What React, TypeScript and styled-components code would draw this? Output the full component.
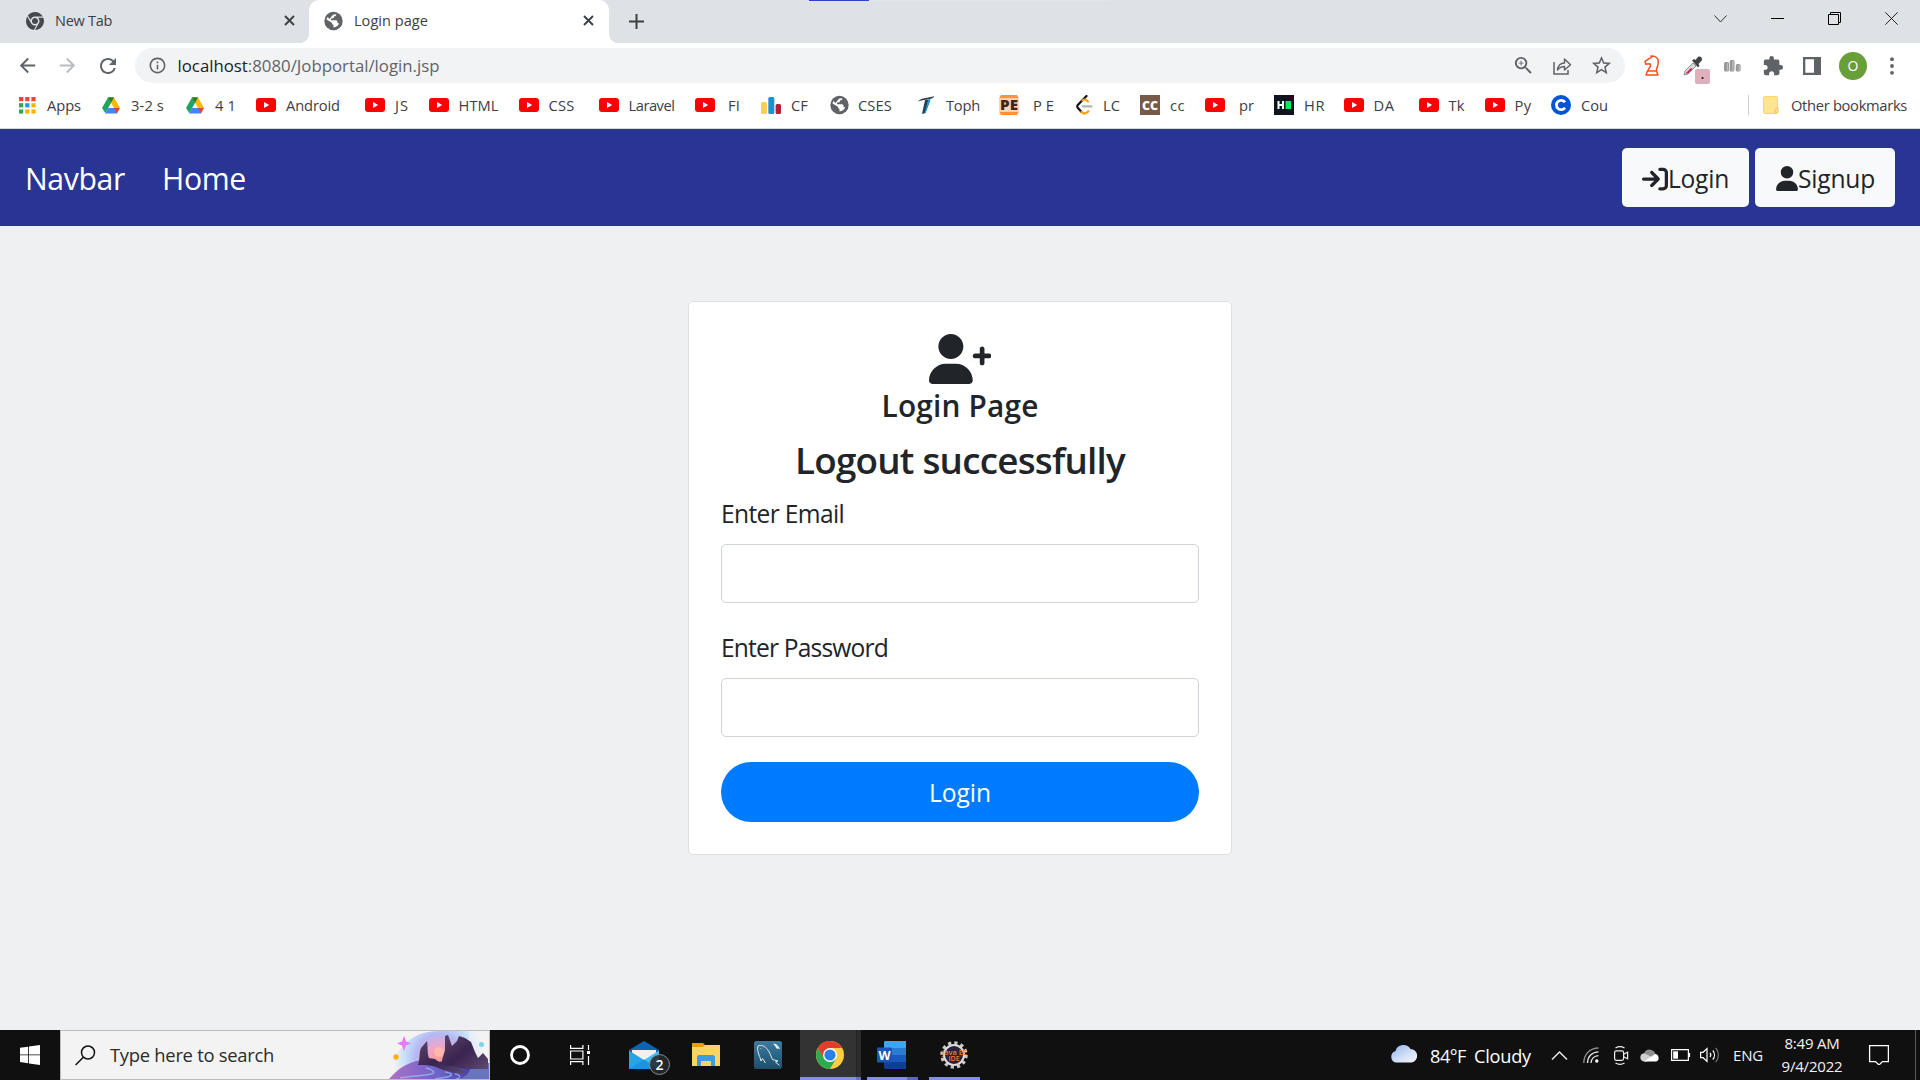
import React, { useLayoutEffect, useRef, useState } from "react";
import styled, { createGlobalStyle, css } from "styled-components";
import { FaArrowRightToBracket, FaChrome, FaUser } from "react-icons/fa6";
import {
  MdArrowBack,
  MdArrowForward,
  MdExtension,
  MdInfoOutline,
  MdRefresh,
  MdStarBorder,
  MdZoomIn,
} from "react-icons/md";

const GlobalStyle = createGlobalStyle`
  * { box-sizing: border-box; }
  body {
    margin: 0;
    overflow: hidden;
    font-family: "Open Sans", "Noto Sans", sans-serif;
  }
  svg { display: block; flex: none; }
`;

/* ---------- text set to a given measure ---------- */

const Measure = styled.span<{ $w: number; $size: number; $color: string; $weight?: number; $ml?: number; $drop?: number }>`
  display: block;
  flex: none;
  width: ${(p) => p.$w}px;
  margin-left: ${(p) => p.$ml ?? 0}px;
  padding-top: ${(p) => p.$drop ?? 0}px;
  font-size: ${(p) => p.$size}px;
  font-weight: ${(p) => p.$weight ?? 400};
  color: ${(p) => p.$color};
  white-space: pre;
  text-align: left;
`;

type LabelProps = {
  w: number;
  size: number;
  color?: string;
  weight?: number;
  ml?: number;
  drop?: number;
  text: string;
  children?: React.ReactNode;
};

function Label({ w, size, color = "#3c4043", weight, ml, drop, text, children }: LabelProps) {
  const ref = useRef<HTMLSpanElement>(null);
  const [spacing, setSpacing] = useState(0);
  useLayoutEffect(() => {
    if (!ref.current) return;
    const natural = ref.current.getBoundingClientRect().width;
    setSpacing((w - natural) / text.length);
  }, [w, text]);
  return (
    <Measure $w={w} $size={size} $color={color} $weight={weight} $ml={ml} $drop={drop}>
      <span ref={ref} style={{ letterSpacing: spacing }}>
        {children ?? text}
      </span>
    </Measure>
  );
}

/* ---------- browser chrome ---------- */

const Screen = styled.div`
  width: 1920px;
  height: 1080px;
  display: flex;
  flex-direction: column;
  background: #eff0f2;
`;

const TabStrip = styled.div`
  position: relative;
  height: 43px;
  flex: none;
  display: flex;
  align-items: stretch;
  background: #dee1e6;
`;

const LoadStripe = styled.div`
  position: absolute;
  top: 0;
  left: 809px;
  width: 301px;
  height: 1px;
  background: linear-gradient(90deg, #2f3fd3 60px, #e4e5e8 60px);
`;

const Tab = styled.div<{ $active?: boolean; $w: number; $pl: number }>`
  position: relative;
  width: ${(p) => p.$w}px;
  padding: 0 12px 2px ${(p) => p.$pl}px;
  display: flex;
  align-items: center;
  ${(p) =>
    p.$active &&
    css`
      background: #fff;
      border-radius: 10px 10px 0 0;
      &::before,
      &::after {
        content: "";
        position: absolute;
        bottom: 0;
        width: 10px;
        height: 10px;
      }
      &::before {
        left: -10px;
        background: radial-gradient(circle at 0 0, #dee1e6 10px, #fff 10.5px);
      }
      &::after {
        right: -10px;
        background: radial-gradient(circle at 100% 0, #dee1e6 10px, #fff 10.5px);
      }
    `}
`;

const PushRight = styled.div<{ $gap?: number; $pr?: number }>`
  margin-left: auto;
  display: flex;
  align-items: center;
  gap: ${(p) => p.$gap ?? 0}px;
  padding-right: ${(p) => p.$pr ?? 0}px;
`;

const NewTab = styled.div`
  display: flex;
  align-items: center;
  margin-left: 20px;
`;

const WindowControls = styled(PushRight)`
  padding-bottom: 6px;
`;

const Toolbar = styled.div`
  height: 40px;
  flex: none;
  display: flex;
  align-items: flex-end;
  padding: 0 13px 0 16px;
  background: #fff;
`;

const NavIcons = styled.div`
  height: 35px;
  width: 119px;
  display: flex;
  align-items: center;
  gap: 17px;
  color: #5f6368;
`;

const Omnibox = styled.div`
  width: 1490px;
  height: 35px;
  border-radius: 18px;
  padding: 0 12px 0 13px;
  display: flex;
  align-items: center;
  background: #f1f3f4;
  color: #5f6368;
`;

const Host = styled.span`
  color: #202124;
`;

const Extensions = styled.div`
  height: 35px;
  margin-left: 18px;
  display: flex;
  align-items: center;
  color: #5f6368;
`;

const ExtIcon = styled.div<{ $ml?: number }>`
  position: relative;
  margin-left: ${(p) => p.$ml ?? 0}px;
`;

const PickerBadge = styled.span`
  position: absolute;
  left: 12px;
  top: 13px;
  width: 15px;
  height: 15px;
  border-radius: 2px;
  background: #e0afbd;
  color: #222;
  font-size: 12px;
  font-weight: 700;
  line-height: 11px;
  text-align: center;
`;

const Avatar = styled.div`
  width: 28px;
  height: 28px;
  margin-left: 18px;
  border-radius: 50%;
  background: #689f38;
  color: #fff;
  display: flex;
  align-items: center;
  justify-content: center;
  font-size: 14px;
`;

const BookmarkBar = styled.div`
  height: 46px;
  flex: none;
  display: flex;
  align-items: center;
  padding: 0 0 1px 19px;
  background: #fff;
  border-bottom: 1px solid #d6d8dc;
`;

const Bookmark = styled.div<{ $w: number }>`
  width: ${(p) => p.$w}px;
  flex: none;
  display: flex;
  align-items: center;
`;

const IconBox = styled.div<{ $w: number }>`
  width: ${(p) => p.$w}px;
  flex: none;
`;

const Divider = styled.div`
  width: 1px;
  height: 20px;
  background: #c9ccd0;
`;

/* ---------- page ---------- */

const Navbar = styled.div`
  height: 97px;
  flex: none;
  display: flex;
  align-items: center;
  padding: 0 25px 0 24px;
  background: #283593;
`;

const NavButton = styled.button<{ $w: number; $pl: number }>`
  width: ${(p) => p.$w}px;
  height: 59px;
  padding: 2px 0 0 ${(p) => p.$pl}px;
  border: 0;
  border-radius: 5px;
  background: #f8f9fa;
  color: #212529;
  font-family: inherit;
  display: flex;
  align-items: center;
`;

const Page = styled.main`
  flex: 1;
  padding-top: 75px;
  display: flex;
  justify-content: center;
  align-items: flex-start;
`;

const Card = styled.section`
  width: 544px;
  height: 554px;
  padding: 32px 32px 0;
  border: 1px solid #dfdfdf;
  border-radius: 5px;
  background: #fff;
`;

const CardHead = styled.header`
  display: flex;
  flex-direction: column;
  align-items: center;
  color: #212529;
`;

const Line = styled.div<{ $h: number; $mt: number }>`
  height: ${(p) => p.$h}px;
  line-height: ${(p) => p.$h}px;
  margin-top: ${(p) => p.$mt}px;
`;

const Input = styled.input`
  display: block;
  width: 478px;
  height: 59px;
  margin-top: 11px;
  border: 1px solid #ced4da;
  border-radius: 5px;
  outline: 0;
  background: #fff;
`;

const Submit = styled.button`
  width: 478px;
  height: 60px;
  margin-top: 25px;
  padding: 0;
  border: 0;
  border-radius: 30px;
  background: #007bff;
  font-family: inherit;
  display: flex;
  align-items: center;
  justify-content: center;
`;

/* ---------- taskbar ---------- */

const Taskbar = styled.footer`
  height: 50px;
  flex: none;
  display: flex;
  background: #101010;
`;

const Start = styled.div`
  width: 60px;
  display: flex;
  align-items: center;
  justify-content: center;
`;

const Search = styled.div`
  width: 430px;
  height: 50px;
  padding-left: 14px;
  display: flex;
  align-items: center;
  background: #f3f3f3;
  border: 1px solid #bcbcbc;
`;

const SearchHint = styled.div`
  padding-bottom: 2px;
`;

const Art = styled.div`
  margin-left: auto;
  height: 48px;
`;

const TaskButton = styled.div<{ $w: number; $ml?: number; $pr?: number; $pl?: number; $bg?: string; $line?: string }>`
  position: relative;
  width: ${(p) => p.$w}px;
  margin-left: ${(p) => p.$ml ?? 0}px;
  padding-right: ${(p) => p.$pr ?? 0}px;
  padding-left: ${(p) => p.$pl ?? 0}px;
  display: flex;
  align-items: center;
  justify-content: center;
  background: ${(p) => p.$bg ?? "none"};
  &::after {
    content: "";
    position: absolute;
    left: 0;
    right: 0;
    bottom: 0;
    height: 3px;
    background: ${(p) => p.$line ?? "none"};
  }
`;

const MailBadge = styled.span`
  position: absolute;
  left: 39px;
  top: 24px;
  width: 21px;
  height: 21px;
  border-radius: 50%;
  border: 1px solid #8b8f92;
  background: rgba(38, 42, 45, 0.88);
  color: #fff;
  font-size: 14px;
  font-weight: 600;
  line-height: 19px;
  text-align: center;
`;

const Tray = styled.div`
  margin-left: auto;
  width: 530px;
  display: flex;
  align-items: center;
`;

const TrayIcon = styled.div<{ $w: number }>`
  width: ${(p) => p.$w}px;
  flex: none;
`;

const Clock = styled.div`
  width: 60px;
  margin-left: 19px;
  display: flex;
  flex-direction: column;
  align-items: center;
  line-height: 23px;
`;

const PeekEdge = styled.div`
  width: 1px;
  height: 50px;
  margin-left: auto;
  margin-right: 4px;
  background: #5c5c5c;
`;

/* ---------- drawings ---------- */

const Close = () => (
  <svg width="11" height="11" viewBox="0 0 11 11" stroke="#3c4043" strokeWidth="1.9">
    <path d="M1 1l9 9M10 1l-9 9" />
  </svg>
);

const Globe = () => (
  <svg width="20" height="20" viewBox="0 0 20 20">
    <circle cx="9.500" cy="10" r="9.200" fill="#5f6368" />
    <path
      d="M12.300 3.300c0 1.500-.8 2.200-2.300 2.300L9.600 7.300H7.400l-.5 2h5c1 0 1.600.7 1.600 1.700v1.200h1.700c-1 2.600-3 4-5.700 4.200v-2.100L8.200 13l-.3-1.200-5.400-3.300c.2-1 .6-1.800 1.100-2.500L5.500 8l1.800-2.300 2-2.200z"
      fill="#fff"
    />
  </svg>
);

const YouTube = () => (
  <svg width="20" height="14" viewBox="0 0 20 14">
    <rect width="20" height="14" rx="3" fill="#f00" />
    <path d="M8 4l5.2 3L8 10z" fill="#fff" />
  </svg>
);

const Drive = () => (
  <svg width="18" height="17" viewBox="0 0 18 16">
    <path d="M6 0h6L3.3 15.6 0 10.4z" fill="#1fa463" />
    <path d="M6 0h6L9 5.4z" fill="#188038" />
    <path d="M6 0h6l6 10.6h-6z" fill="#ffba00" />
    <path d="M6 0L9 5.3 12 0z" fill="#188038" />
    <path d="M6 10.6h9L15 16H3z" fill="#4285f4" />
    <path d="M12 10.6h6L15 16z" fill="#ea4335" />
  </svg>
);

const AppsGrid = () => (
  <svg width="17" height="17" viewBox="0 0 17 17">
    {["#f44336", "#f44336", "#f44336", "#34a853", "#2196f3", "#fbb300", "#34a853", "#fbb300", "#fbb300"].map((c, i) => (
      <rect key={i} x={(i % 3) * 6.2} y={Math.floor(i / 3) * 6.2} width="4.2" height="4.2" fill={c} />
    ))}
  </svg>
);

const Codeforces = () => (
  <svg width="20" height="17" viewBox="0 0 20 17">
    <rect x="0" y="5" width="6" height="12" rx="1.5" fill="#f9cf58" />
    <rect x="7.3" y="0" width="6" height="17" rx="1.5" fill="#1f8fd0" />
    <rect x="14.6" y="7" width="5.4" height="10" rx="1.5" fill="#b71f2e" />
  </svg>
);

const Toph = () => (
  <svg width="17" height="18" viewBox="0 0 17 18">
    <path d="M0 5.5C4 1 10 2.5 16.5 0 14 4.5 6 3 0 5.5z" fill="#333b48" />
    <path d="M7 4l5.5-.6L7.5 17 4 18z" fill="#2c3e50" />
    <path d="M10 4l2.5-.6L7.5 17l-1 .4z" fill="#0aa0f5" />
  </svg>
);

const Euler = () => (
  <svg width="20" height="20" viewBox="0 0 20 20">
    <path d="M2 0h16l2 3.500H0zM0 16.500h20L18 20H2z" fill="#ff9240" />
    <rect y="3.500" width="20" height="13" fill="#f8d6b8" />
    <text x="1" y="15" fontSize="14" fontWeight="800" textLength="18" lengthAdjust="spacingAndGlyphs" fill="#4a2412">
      PE
    </text>
  </svg>
);

const LeetCode = () => (
  <svg width="17" height="20" viewBox="0 0 17 20" fill="none" strokeWidth="2.2" strokeLinecap="round">
    <path d="M10.5 1L2 9.8c-1 1-1 2.200 0 3.200l3.500 4" stroke="#111" />
    <path d="M6.500 5.500c2-1.600 4-.8 5.500 1.200M5.500 17c2.500 2.500 4.500 1.800 7-.7" stroke="#ffa116" />
    <path d="M7 11.300h8.500" stroke="#b3b3b3" />
  </svg>
);

const CodeChef = () => (
  <svg width="20" height="20" viewBox="0 0 20 20">
    <rect width="20" height="20" fill="#765a48" />
    <text x="2" y="14.500" fontSize="12.500" fontWeight="800" textLength="16" lengthAdjust="spacingAndGlyphs" fill="#fff">
      CC
    </text>
  </svg>
);

const HackerRank = () => (
  <svg width="20" height="20" viewBox="0 0 20 20">
    <rect width="20" height="20" fill="#0e141e" />
    <path d="M4.500 6v8M9 6v8M4.500 10H9" stroke="#fff" strokeWidth="2" />
    <rect x="11.500" y="6" width="5.500" height="8" fill="#05ec5e" />
  </svg>
);

const Coursera = () => (
  <svg width="20" height="20" viewBox="0 0 20 20">
    <circle cx="10" cy="10" r="10" fill="#0056d2" />
    <path d="M14 7.300a4.700 4.700 0 1 0 0 5.400" fill="none" stroke="#fff" strokeWidth="2.800" />
  </svg>
);

const Folder = () => (
  <svg width="16" height="18" viewBox="0 0 16 18">
    <rect x=".5" y=".5" width="14" height="17" rx="1" fill="#ffe591" stroke="#fbd866" />
    <path d="M12 17.500v-4l3-2v4.500z" fill="#ffe591" stroke="#f2c84b" />
  </svg>
);

const ShareOut = () => (
  <svg width="19" height="18" viewBox="0 0 19 18" fill="none" stroke="#5f6368" strokeWidth="1.500">
    <path d="M1 5v12h14v-4" />
    <path d="M4.500 13c.6-4.600 3-7 7-7V2l6 5.800-6 5.200V9.500c-3 0-5 1-7 3.500z" strokeLinejoin="round" />
  </svg>
);

const Knight = () => (
  <svg width="16" height="21" viewBox="0 0 16 21" fill="none" stroke="#f4511e" strokeWidth="1.500" strokeLinejoin="round">
    <path d="M3.500 16h9l1.500 4H2z" />
    <path d="M12.300 16c-.3-2.500 2.500-5.500 2-9.500C14 2.500 10.500.800 7 1l.5 1.500C5 3 3.500 5 1 6.300l.8 2.900 4-.4.9 1.700C6.200 12.500 4 13.500 4 16" />
  </svg>
);

const Dropper = () => (
  <svg width="20" height="20" viewBox="0 0 20 20">
    <path d="M1 19l1-4 8-8 3 3-8 8z" fill="#d8d8d8" stroke="#8f8f8f" />
    <path d="M2.500 17.500L8 12l1.500 1L5 17.500z" fill="#d01d5b" />
    <path d="M9 4.500l2-1.500 1.500 1L15 1c2-1.500 5 .8 3.700 3.500L15.500 8l1 1.500-1.500 2z" fill="#3f4144" />
  </svg>
);

const GrayBars = () => (
  <svg width="17" height="12" viewBox="0 0 17 12">
    <rect x="0" y="2" width="5" height="9.500" rx="1.500" fill="#989898" />
    <rect x="5.700" y="0" width="4.800" height="11.500" rx="1.500" fill="#989898" />
    <rect x="11.800" y="4" width="4.800" height="7.500" rx="1.500" fill="#989898" />
    <path d="M3.500 3v8M9 1v10M15.200 5v6" stroke="#bcbcbc" strokeWidth="1.300" />
  </svg>
);

const SidePanel = () => (
  <svg width="18" height="18" viewBox="0 0 18 18">
    <path fillRule="evenodd" d="M0 0h18v18H0zM2.300 2.300v13.400h8.700V2.300z" fill="#5f6368" />
  </svg>
);

const Dots = () => (
  <svg width="4" height="18" viewBox="0 0 4 18" fill="#5f6368">
    <circle cx="2" cy="2.200" r="1.900" />
    <circle cx="2" cy="9" r="1.900" />
    <circle cx="2" cy="15.800" r="1.900" />
  </svg>
);

const UserPlus = () => (
  <svg width="62.500" height="50" viewBox="0 0 640 512" fill="#212529">
    <path d="M224 256c70.700 0 128-57.310 128-128S294.700 0 224 0C153.300 0 96 57.310 96 128S153.300 256 224 256zM274.700 304H173.300C77.610 304 0 381.600 0 477.300C0 496.500 15.520 512 34.660 512h378.700C432.500 512 448 496.500 448 477.300C448 381.600 370.400 304 274.700 304zM616 200h-48v-48C568 138.800 557.300 128 544 128s-24 10.750-24 24v48h-48C458.800 200 448 210.800 448 224s10.750 24 24 24h48v48C520 309.300 530.800 320 544 320s24-10.750 24-24v-48h48C629.300 248 640 237.300 640 224S629.300 200 616 200z" />
  </svg>
);

const Windows = () => (
  <svg width="20" height="20" viewBox="0 0 20 20" fill="#fff">
    <path d="M0 2.800L8.200 1.700v7.800H0zM9 1.600L20 0v9.500H9zM0 10.300h8.200v7.900L0 17.100zM9 10.300h11V20L9 18.400z" />
  </svg>
);

const Magnifier = () => (
  <svg width="21" height="21" viewBox="0 0 21 21" fill="none" stroke="#111" strokeWidth="1.500">
    <circle cx="13" cy="7.500" r="6.500" />
    <path d="M8.300 12.200L.6 20" />
  </svg>
);

const SearchArt = () => (
  <svg width="100" height="48" viewBox="0 0 100 48">
    <defs>
      <radialGradient id="halo" cx="50" cy="26" r="46" gradientUnits="userSpaceOnUse">
        <stop offset="0" stopColor="#ff9a8c" />
        <stop offset=".25" stopColor="#eda6cc" />
        <stop offset=".5" stopColor="#b4b8f4" />
        <stop offset=".75" stopColor="#c9e0f8" />
        <stop offset="1" stopColor="#f3f3f3" />
      </radialGradient>
      <linearGradient id="sea" x1="0" x2="1">
        <stop offset="0" stopColor="#b070c4" />
        <stop offset=".5" stopColor="#6c62cc" />
        <stop offset=".8" stopColor="#4b40b0" />
        <stop offset="1" stopColor="#6a74bc" />
      </linearGradient>
      <linearGradient id="rock" x1="0" y1="0" x2="1" y2="1">
        <stop offset="0" stopColor="#5b4468" />
        <stop offset=".5" stopColor="#3a2450" />
        <stop offset="1" stopColor="#5e4a72" />
      </linearGradient>
    </defs>
    <path d="M0 48C4 20 20 0 50 0h50v48z" fill="url(#halo)" />
    <path d="M80 0h20v30H80z" fill="#f3f3f3" opacity=".6" />
    <circle cx="50" cy="21" r="5" fill="#ffb8ae" />
    <path d="M0 48c8-9 16-16 32-19l36 3h32v16z" fill="url(#sea)" />
    <path
      d="M37 37c8 2 10 5 5 6-7 2-20 2-31 4M56 41c8 1 8 4 2 5l-12 2M66 43c6 1 6 4 1 5"
      fill="none"
      stroke="#9cc0f5"
      strokeWidth="1.500"
      opacity=".7"
    />
    <path d="M82 35c-1 7-6 11-12 13h30V33z" fill="#6675bd" />
    <path d="M29 34c2-5 1-13 3-17l6-7c1 5 0 12 2 17l6 1 4 3 5-1 5 5 12 3 6 3c-5 3-13 1-20-1-8-2-13-6-23-6z" fill="url(#rock)" />
    <path d="M53 29l3-10V5l3-1 4 11 5-5 2-5 6 2 6 4 4 10 3 6 5-5 5 6v10H76c-8-1-14-3-23-4z" fill="url(#rock)" />
    <path d="M15 7l1.400 4L20 12.500l-3.600 1.300L15 18l-1.400-4.200L10 12.500 13.600 11z" fill="#e879f9" stroke="#e879f9" strokeWidth="1.500" />
    <circle cx="7" cy="26" r="2.700" fill="#fbb40a" />
    <circle cx="92.500" cy="13.500" r="2.500" fill="#7ad7ea" />
  </svg>
);

const TaskView = () => (
  <svg width="20" height="20" viewBox="0 0 20 20" fill="none" stroke="#fff" strokeWidth="1.200">
    <path d="M.6 0v3.400h12.300V0M.6 20v-3.400h12.300V20M.6 6h12.300v8H.6zM18.500 0v5M18.500 11v9" />
    <rect x="17" y="6" width="3" height="3" fill="#fff" stroke="none" />
  </svg>
);

const Mail = () => (
  <svg width="30" height="28" viewBox="0 0 30 28">
    <path d="M0 9L15 0l15 9v4H0z" fill="#0a63b4" />
    <path d="M3 9h24v10H3z" fill="#f1f1f1" />
    <path d="M0 9.500L15 19 0 28zM0 28V10l30 18z" fill="#25a5e8" />
    <path d="M30 9.500L15 19l8 9h7z" fill="#3dc1f5" />
    <path d="M0 28l15-9.500L30 28z" fill="#1b93dd" />
  </svg>
);

const Explorer = () => (
  <svg width="28" height="24" viewBox="0 0 28 24">
    <path d="M0 0h11l3 3v5H0z" fill="#e3a008" />
    <path d="M0 4h11l2-2h15v21H0z" fill="#fdd462" />
    <path d="M5 23v-9c0-1 .8-2 2-2h14c1 0 2 1 2 2v9h-4v-5H9v5z" fill="#3f9be3" />
  </svg>
);

const MySql = () => (
  <svg width="28" height="28" viewBox="0 0 28 28">
    <defs>
      <linearGradient id="sql" x1="0" y1="0" x2="0" y2="1">
        <stop offset="0" stopColor="#3d7b9f" />
        <stop offset="1" stopColor="#1d4f6b" />
      </linearGradient>
    </defs>
    <rect width="28" height="28" rx="2.500" fill="url(#sql)" />
    <path
      d="M7 20c-1-3-1-4-2-6-1-3-2-6-1-9 3-1.500 7 0 9.500 3.500 2.500 3 3.500 7 5 10l5.500 1.500-2.500 1 4 3.500M7 20l1.500-2.500 3 4.500M6.500 7.500l.8.600"
      fill="none"
      stroke="#dfeaf0"
      strokeWidth="1"
    />
    <path d="M19 2.500l3 .5 3 3 1 2-2-.5-1 .5-2-3z" fill="#e9f0f4" />
  </svg>
);

const ChromeColor = () => (
  <svg width="28" height="28" viewBox="0 0 28 28">
    <circle cx="14" cy="14" r="14" fill="#ffcd40" />
    <path d="M1.900 7A14 14 0 0 1 26.100 7H14z" fill="#e33b2e" />
    <path d="M1.900 7a14 14 0 0 0 12.100 21l6.100-10.500L14 14l-6 3.500z" fill="#2da94f" />
    <path d="M14 7h12.100H14L8 17.500 1.900 7A14 14 0 0 1 14 0z" fill="#e33b2e" />
    <circle cx="14" cy="14" r="7" fill="#fff" />
    <circle cx="14" cy="14" r="5.600" fill="#2f7de9" />
  </svg>
);

const Word = () => (
  <svg width="29" height="28" viewBox="0 0 29 28">
    <path d="M7 1.500C7 .6 7.600 0 8.500 0H29v7H7z" fill="#41a5ee" />
    <path d="M7 7h22v7H7z" fill="#2b7cd3" />
    <path d="M7 14h22v7H7z" fill="#185abd" />
    <path d="M7 21h22v7H8.500C7.600 28 7 27.400 7 26.500z" fill="#103f91" />
    <rect y="6.500" width="15" height="15" rx="1.300" fill="#1a56b8" />
    <text x="7.500" y="18.500" textAnchor="middle" fontSize="12.500" fontWeight="700" fill="#fff">
      W
    </text>
  </svg>
);

const Eclipse = () => (
  <svg width="28" height="28" viewBox="0 0 28 28">
    <circle cx="14" cy="14" r="12" fill="none" stroke="#c9c9c9" strokeWidth="3.500" strokeDasharray="3.140 3.140" />
    <circle cx="14" cy="14" r="10" fill="#2b2138" stroke="#dcdcdc" strokeWidth="2" />
    <text x="2" y="13.500" fontSize="7.500" fontWeight="600" textLength="25" lengthAdjust="spacingAndGlyphs" fill="#e8812a">
      Java EE
    </text>
    <text x="14" y="19.500" textAnchor="middle" fontSize="7" fontWeight="600" fill="#e8812a">
      IDE
    </text>
  </svg>
);

const WeatherCloud = () => (
  <svg width="28" height="22" viewBox="0 0 28 22">
    <defs>
      <linearGradient id="cloud" x1="0" y1="0" x2="1" y2="1">
        <stop offset="0" stopColor="#8fb3ea" />
        <stop offset=".6" stopColor="#d6e3f7" />
        <stop offset="1" stopColor="#f2f5fb" />
      </linearGradient>
    </defs>
    <path d="M6 18.500a6 6 0 0 1-.5-11.600A8.200 8.200 0 0 1 20.500 5 6.800 6.800 0 0 1 21.500 18.500z" fill="url(#cloud)" />
  </svg>
);

const ArcWifi = () => (
  <svg width="16" height="16" viewBox="0 0 16 16" fill="none" strokeWidth="1.300">
    <path d="M.8 16C.8 7.500 7 1 15.500 1" stroke="#8d8d8d" />
    <path d="M4.500 16C4.500 9.500 9 5 15.500 4.800" stroke="#e6e6e6" />
    <path d="M8 16c0-4 3-7.200 7.500-7.300" stroke="#e6e6e6" />
    <circle cx="13.800" cy="14" r="1.700" fill="#fff" />
  </svg>
);

const MeetCam = () => (
  <svg width="15" height="19" viewBox="0 0 15 19" fill="none" stroke="#eee" strokeWidth="1.200">
    <rect x=".6" y="4.800" width="9" height="9.500" rx="1.800" />
    <path d="M9.600 8.300l4-2v6.500l-4-2M1.500 2C4 .5 8 .5 10.500 2M1.500 17c2.500 1.500 6.500 1.500 9 0" />
  </svg>
);

const OneDrive = () => (
  <svg width="20" height="15" viewBox="0 0 20 15">
    <path d="M4 5.500a6 6 0 0 1 11.500 1L8 10.500z" fill="#8f8f8f" />
    <path d="M3.800 13.500A4.200 4.200 0 0 1 4 5.200l8 3.800-5 4.500z" fill="#d0d0d0" />
    <path d="M4 13.500l11-7.400a3.800 3.800 0 0 1 1 7.400z" fill="#fff" />
  </svg>
);

const Battery = () => (
  <svg width="20" height="12" viewBox="0 0 20 12" fill="none" stroke="#fff" strokeWidth="1.200">
    <path d="M.6.600h16.800v10.800H.6z" />
    <path d="M18.500 4v4" />
    <rect x="2.200" y="2.300" width="4.800" height="7.400" fill="#fff" stroke="none" />
  </svg>
);

const Speaker = () => (
  <svg width="20" height="18" viewBox="0 0 20 18" fill="none" stroke="#fff" strokeWidth="1.200">
    <path d="M.6 6.300h2.500L7 2.600v12.800l-3.900-3.700H.6z" />
    <path d="M10 7c1 1.200 1 2.800 0 4M12.800 4.500c2.200 2.600 2.200 6.400 0 9" />
    <path d="M15.700 2c3.600 4 3.600 10 0 14" stroke="#777" />
  </svg>
);

/* ---------- data ---------- */

type Mark = { icon: React.ReactNode; label: string; w: number; gap: number; textW: number };

const BOOKMARKS: Mark[] = [
  { icon: <AppsGrid />, label: "Apps", w: 83, gap: 28, textW: 34 },
  { icon: <Drive />, label: "3-2 s", w: 84, gap: 29, textW: 33 },
  { icon: <Drive />, label: "4 1", w: 70, gap: 29, textW: 21 },
  { icon: <YouTube />, label: "Android", w: 109, gap: 30, textW: 54 },
  { icon: <YouTube />, label: "JS", w: 64, gap: 30, textW: 14 },
  { icon: <YouTube />, label: "HTML", w: 90, gap: 29.5, textW: 40 },
  { icon: <YouTube />, label: "CSS", w: 80, gap: 29.5, textW: 26 },
  { icon: <YouTube />, label: "Laravel", w: 96, gap: 29.5, textW: 46 },
  { icon: <YouTube />, label: "FI", w: 66, gap: 33, textW: 12 },
  { icon: <Codeforces />, label: "CF", w: 69, gap: 30, textW: 17 },
  { icon: <Globe />, label: "CSES", w: 88, gap: 28, textW: 34 },
  { icon: <Toph />, label: "Toph", w: 81, gap: 28, textW: 34 },
  { icon: <Euler />, label: "P E", w: 77, gap: 34, textW: 21 },
  { icon: <LeetCode />, label: "LC", w: 64, gap: 27, textW: 17 },
  { icon: <CodeChef />, label: "cc", w: 65, gap: 30, textW: 15 },
  { icon: <YouTube />, label: "pr", w: 69, gap: 34, textW: 15 },
  { icon: <HackerRank />, label: "HR", w: 70, gap: 30, textW: 21 },
  { icon: <YouTube />, label: "DA", w: 75, gap: 29.5, textW: 21 },
  { icon: <YouTube />, label: "Tk", w: 66, gap: 29.5, textW: 16 },
  { icon: <YouTube />, label: "Py", w: 66, gap: 29.5, textW: 17 },
  { icon: <Coursera />, label: "Cou", w: 197, gap: 30, textW: 27 },
];

const INK = "#212529";

export default function App() {
  return (
    <>
      <GlobalStyle />
      <Screen>
        <TabStrip>
          <Tab $w={309} $pl={26}>
            <FaChrome size={18} color="#45494d" />
            <Label text="New Tab" size={14.5} w={57} ml={11} />
            <PushRight $pr={2}>
              <Close />
            </PushRight>
          </Tab>
          <Tab $active $w={300} $pl={15}>
            <Globe />
            <Label text="Login page" size={14.5} w={74} ml={10} />
            <PushRight $pr={3}>
              <Close />
            </PushRight>
          </Tab>
          <NewTab>
            <svg width="15" height="15" viewBox="0 0 15 15" stroke="#3c4043" strokeWidth="2">
              <path d="M7.500 0v15M0 7.500h15" />
            </svg>
          </NewTab>
          <WindowControls $gap={44} $pr={22.5}>
            <svg width="13" height="8" viewBox="0 0 13 8" fill="none" stroke="#333">
              <path d="M.5.500l6 6.500 6-6.500" />
            </svg>
            <svg width="13" height="1" viewBox="0 0 13 1">
              <rect width="13" height="1" fill="#000" />
            </svg>
            <svg width="13" height="13" viewBox="0 0 13 13" fill="none" stroke="#000">
              <path d="M.5 2.500h10v10H.5zM2.500 2.500v-2h10v10h-2" />
            </svg>
            <svg width="13" height="13" viewBox="0 0 13 13" fill="none" stroke="#222">
              <path d="M.3.300l12.400 12.400M12.700.300L.3 12.700" />
            </svg>
          </WindowControls>
          <LoadStripe />
        </TabStrip>

        <Toolbar>
          <NavIcons>
            <MdArrowBack size={23} />
            <MdArrowForward size={23} color="#babcbe" />
            <MdRefresh size={24} />
          </NavIcons>
          <Omnibox>
            <MdInfoOutline size={19} />
            <Label text="localhost:8080/Jobportal/login.jsp" size={16.8} w={262} ml={10.5} color="#5f6368">
              <Host>localhost</Host>:8080/Jobportal/login.jsp
            </Label>
            <PushRight $gap={18}>
              <MdZoomIn size={23} />
              <ShareOut />
              <MdStarBorder size={23} />
            </PushRight>
          </Omnibox>
          <Extensions>
            <ExtIcon $ml={1}>
              <Knight />
            </ExtIcon>
            <ExtIcon $ml={23}>
              <Dropper />
              <PickerBadge>.</PickerBadge>
            </ExtIcon>
            <ExtIcon $ml={21}>
              <GrayBars />
            </ExtIcon>
            <ExtIcon $ml={21}>
              <MdExtension size={22} />
            </ExtIcon>
            <ExtIcon $ml={19}>
              <SidePanel />
            </ExtIcon>
            <Avatar>O</Avatar>
            <ExtIcon $ml={23}>
              <Dots />
            </ExtIcon>
          </Extensions>
        </Toolbar>

        <BookmarkBar>
          {BOOKMARKS.map((b, i) => (
            <Bookmark key={i} $w={b.w}>
              <IconBox $w={b.gap}>{b.icon}</IconBox>
              <Label text={b.label} size={14.7} w={b.textW} />
            </Bookmark>
          ))}
          <Divider />
          <Bookmark $w={160}>
            <IconBox $w={14} />
            <IconBox $w={28}>
              <Folder />
            </IconBox>
            <Label text="Other bookmarks" size={14.7} w={116} />
          </Bookmark>
        </BookmarkBar>

        <Navbar>
          <Label text="Navbar" size={30.2} w={100} ml={1} drop={1} color="#fff" />
          <Label text="Home" size={30.2} w={84} ml={37} drop={1} color="#fff" />
          <PushRight $gap={6}>
            <NavButton $w={127} $pl={20}>
              <FaArrowRightToBracket size={26} />
              <Label text="Login" size={24.6} w={61} color={INK} />
            </NavButton>
            <NavButton $w={140} $pl={21}>
              <FaUser size={25} style={{ width: 22 }} />
              <Label text="Signup" size={24.6} w={77} color={INK} />
            </NavButton>
          </PushRight>
        </Navbar>

        <Page>
          <Card>
            <CardHead>
              <UserPlus />
              <Line $h={36} $mt={4}>
                <Label text="Login Page" size={29.8} w={157} weight={600} color={INK} />
              </Line>
              <Line $h={45} $mt={14}>
                <Label text="Logout successfully" size={36.8} w={330} weight={600} color={INK} />
              </Line>
            </CardHead>
            <Line $h={38} $mt={12}>
              <Label text="Enter Email" size={24.6} w={123} color={INK} />
            </Line>
            <Input type="email" />
            <Line $h={38} $mt={26}>
              <Label text="Enter Password" size={24.6} w={167} color={INK} />
            </Line>
            <Input type="password" />
            <Submit>
              <Label text="Login" size={24.6} w={62} color="#fff" />
            </Submit>
          </Card>
        </Page>

        <Taskbar>
          <Start>
            <Windows />
          </Start>
          <Search>
            <Magnifier />
            <SearchHint>
              <Label text="Type here to search" size={18.4} w={164} ml={14} color="#2b2b2b" />
            </SearchHint>
            <Art>
              <SearchArt />
            </Art>
          </Search>
          <TaskButton $w={60}>
            <svg width="20" height="20" viewBox="0 0 20 20" fill="none" stroke="#fff" strokeWidth="2.800">
              <circle cx="10" cy="10" r="8.500" />
            </svg>
          </TaskButton>
          <TaskButton $w={60}>
            <TaskView />
          </TaskButton>
          <TaskButton $w={68}>
            <Mail />
            <MailBadge>2</MailBadge>
          </TaskButton>
          <TaskButton $w={56}>
            <Explorer />
          </TaskButton>
          <TaskButton $w={66} $pl={2}>
            <MySql />
          </TaskButton>
          <TaskButton
            $w={61}
            $pr={2}
            $bg="linear-gradient(90deg, #333 56px, #1c1c1c 56px, #2c2c2c 57px)"
            $line="linear-gradient(90deg, #858cfa 56px, #6a70c4 56px)"
          >
            <ChromeColor />
          </TaskButton>
          <TaskButton $w={51} $ml={6} $pr={2} $line="linear-gradient(90deg, #858cfa 40px, #6167b8 40px)">
            <Word />
          </TaskButton>
          <TaskButton $w={51} $ml={11} $pr={2} $line="#858cfa">
            <Eclipse />
          </TaskButton>
          <Tray>
            <TrayIcon $w={40}>
              <WeatherCloud />
            </TrayIcon>
            <Label text="84°F" size={18.2} w={36} drop={1} color="#fff" />
            <Label text="Cloudy" size={18.2} w={57} ml={8} drop={1} color="#fff" />
            <TrayIcon $w={52}>
              <svg width="37" height="9" viewBox="0 0 37 9" fill="none" stroke="#eee" strokeWidth="1.400">
                <path d="M21 8.500l7.500-7.500 7.500 7.500" />
              </svg>
            </TrayIcon>
            <TrayIcon $w={31}>
              <ArcWifi />
            </TrayIcon>
            <TrayIcon $w={26}>
              <MeetCam />
            </TrayIcon>
            <TrayIcon $w={31}>
              <OneDrive />
            </TrayIcon>
            <TrayIcon $w={29}>
              <Battery />
            </TrayIcon>
            <TrayIcon $w={33}>
              <Speaker />
            </TrayIcon>
            <Label text="ENG" size={15} w={30} color="#f2f2f2" />
            <Clock>
              <Label text="8:49 AM" size={15} w={55} color="#f2f2f2" />
              <Label text="9/4/2022" size={15} w={61} color="#f2f2f2" />
            </Clock>
            <TrayIcon $w={49}>
              <svg width="47" height="20" viewBox="0 0 47 20" fill="none" stroke="#fff" strokeWidth="1.300">
                <path d="M27.600.600h18.800v16H40.500L37 20l-3.500-3.400h-5.900z" />
              </svg>
            </TrayIcon>
            <PeekEdge />
          </Tray>
        </Taskbar>
      </Screen>
    </>
  );
}
